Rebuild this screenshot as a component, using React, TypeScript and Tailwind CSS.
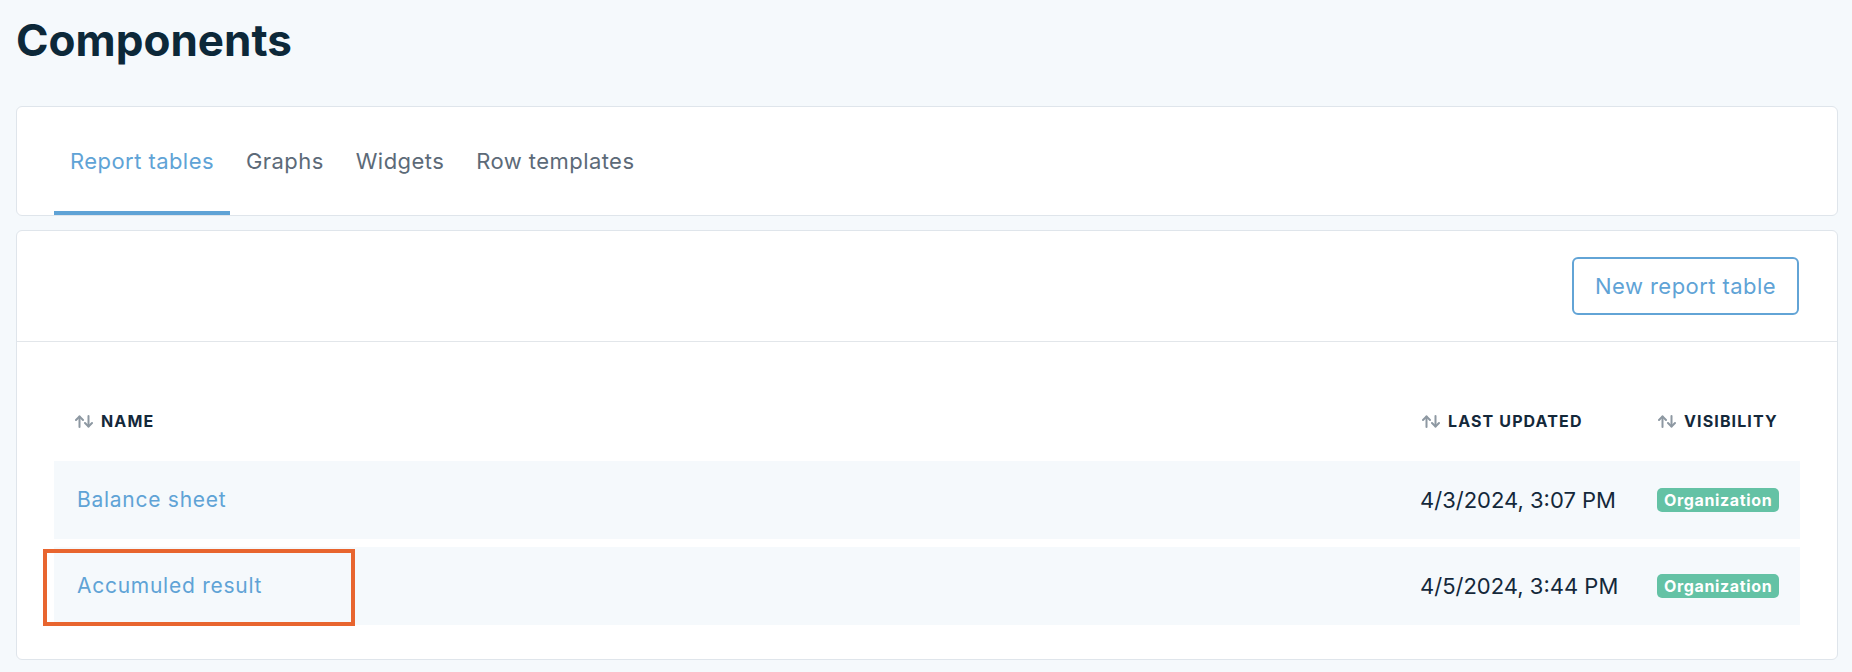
import React from "react";

function SortIcon() {
  return (
    <svg width="18" height="13" viewBox="0 0 18 13" fill="none" stroke="#8d98a2" strokeWidth="2" strokeLinecap="round" strokeLinejoin="round" className="shrink-0">
      <path d="M4.5 12V1.5" />
      <path d="M1 5l3.5-3.5L8 5" />
      <path d="M13.5 1v10.5" />
      <path d="M10 8l3.5 3.5L17 8" />
    </svg>
  );
}

const rows = [
  { name: "Balance sheet", date: "4/3/2024, 3:07 PM" },
  { name: "Accumuled result", date: "4/5/2024, 3:44 PM" },
];

export default function App() {
  return (
    <div
      className="relative min-h-[672px] w-full bg-[#f5f9fc] pl-4 pr-[14px] pb-3"
      style={{ fontFamily: "Inter, 'Open Sans', sans-serif" }}
    >
      <h1 className="pt-[12px] pb-[38px] text-[44px] font-bold leading-[56px] text-[#0c2839]">
        Components
      </h1>

      <div className="h-[110px] rounded-md border border-[#dfe5eb] bg-white pl-[37px] flex items-end">
        <div className="flex">
          {["Report tables", "Graphs", "Widgets", "Row templates"].map((t, i) => (
            <div
              key={t}
              className={
                i === 0
                  ? "px-4 pb-[36px] border-b-4 border-[#5fa3d6] text-[22px] leading-[28px] tracking-[0.02em] text-[#5fa3d6]"
                  : "px-4 pb-[36px] border-b-4 border-transparent text-[22px] leading-[28px] tracking-[0.02em] text-[#5c6a78]"
              }
            >
              {t}
            </div>
          ))}
        </div>
      </div>

      <div className="mt-[14px] rounded-md border border-[#dfe5eb] bg-white">
        <div className="flex justify-end pr-[38px] py-[26px] border-b border-[#e2e6ea]">
          <button className="h-[58px] rounded-md border-2 border-[#62a4d6] px-[21px] text-[22px] tracking-[0.02em] text-[#5fa3d6] bg-white">
            New report table
          </button>
        </div>
        <div className="px-[37px] pt-[39px] pb-[34px]">
          <div className="grid grid-cols-[1fr_237px_165px] h-[80px] items-center text-[16px] font-bold uppercase tracking-[0.07em] text-[#14283a]">
            <div className="flex items-center gap-2 pl-[21px]">
              <SortIcon />
              <span>Name</span>
            </div>
            <div className="flex items-center gap-2 pl-[24px]">
              <SortIcon />
              <span>Last updated</span>
            </div>
            <div className="flex items-center gap-2 pl-[23px]">
              <SortIcon />
              <span>Visibility</span>
            </div>
          </div>
          <div className="flex flex-col gap-2">
            {rows.map((r) => (
              <div key={r.name} className="grid grid-cols-[1fr_237px_165px] h-[78px] items-center bg-[#f5f9fc]">
                <div className="pl-[23px] text-[21px] tracking-[0.035em] text-[#5fa3d6]">{r.name}</div>
                <div className="pl-[22px] text-[22px] text-[#14283a]">{r.date}</div>
                <div className="pl-[22px]">
                  <span className="inline-flex h-[24px] items-center rounded-[5px] bg-[#64c2a5] px-[7px] text-[16px] font-bold tracking-[0.04em] text-white">
                    Organization
                  </span>
                </div>
              </div>
            ))}
          </div>
        </div>
      </div>

      <div className="pointer-events-none absolute left-[43px] top-[549px] h-[77px] w-[312px] border-4 border-[#e8652f]" />
    </div>
  );
}
